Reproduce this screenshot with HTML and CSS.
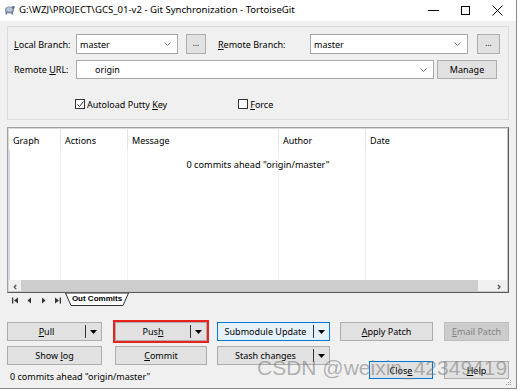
FILE: index.html
```html
<!DOCTYPE html>
<html lang="en">
<head>
<meta charset="utf-8">
<title>Git Synchronization - TortoiseGit</title>
<link rel="stylesheet" href="styles.css">
</head>
<body>
<div class="window">
    <!-- Title bar -->
    <div class="titlebar">
        <svg class="app-icon" width="11" height="11" viewBox="0 0 11 11">
            <ellipse cx="5.5" cy="6" rx="4.5" ry="3.5" fill="#7d8fa6"/>
            <ellipse cx="5.5" cy="5.5" rx="3" ry="2.2" fill="#b9c6d6"/>
            <circle cx="9.3" cy="3.5" r="1.4" fill="#5d6f86"/>
            <rect x="1.5" y="8.5" width="1.6" height="2" fill="#5d6f86"/>
            <rect x="7.5" y="8.5" width="1.6" height="2" fill="#5d6f86"/>
        </svg>
        <span class="title">G:\WZJ\PROJECT\GCS_01-v2 - Git Synchronization - TortoiseGit</span>
        <div class="controls">
            <span class="ctl"><svg width="11" height="11" viewBox="0 0 11 11"><line x1="0" y1="5.5" x2="11" y2="5.5" stroke="#000"/></svg></span>
            <span class="ctl"><svg width="11" height="11" viewBox="0 0 11 11"><rect x="1.5" y="1.5" width="8" height="8" fill="none" stroke="#000"/></svg></span>
            <span class="ctl"><svg width="11" height="11" viewBox="0 0 11 11"><path d="M0.5 0.5 L10.5 10.5 M10.5 0.5 L0.5 10.5" stroke="#000"/></svg></span>
        </div>
    </div>

    <div class="content">
        <!-- Branch / remote settings -->
        <div class="group">
            <div class="row">
                <span class="lbl"><u>L</u>ocal Branch:</span>
                <div class="combo local-combo">
                    <span>master</span>
                    <svg class="chev" width="7" height="4" viewBox="0 0 7 4"><polyline points="0.5,0.5 3.5,3.5 6.5,0.5" fill="none" stroke="#777"/></svg>
                </div>
                <button class="btn dots">...</button>
                <span class="lbl remote-lbl"><u>R</u>emote Branch:</span>
                <div class="combo remote-combo">
                    <span>master</span>
                    <svg class="chev" width="7" height="4" viewBox="0 0 7 4"><polyline points="0.5,0.5 3.5,3.5 6.5,0.5" fill="none" stroke="#777"/></svg>
                </div>
                <button class="btn dots dots-right">...</button>
            </div>
            <div class="row row-url">
                <span class="lbl">Remote <u>U</u>RL:</span>
                <div class="combo url-combo">
                    <span class="url-text">origin</span>
                    <svg class="chev" width="7" height="4" viewBox="0 0 7 4"><polyline points="0.5,0.5 3.5,3.5 6.5,0.5" fill="none" stroke="#777"/></svg>
                </div>
                <button class="btn manage">Manage</button>
            </div>
            <div class="row row-checks">
                <label class="check autoload">
                    <span class="box"><svg width="9" height="9" viewBox="0 0 9 9"><polyline points="1.5,4.5 3.5,6.5 7.5,1.5" fill="none" stroke="#333" stroke-width="1"/></svg></span>
                    <span>Autoload Putty <u>K</u>ey</span>
                </label>
                <label class="check force">
                    <span class="box"></span>
                    <span><u>F</u>orce</span>
                </label>
            </div>
        </div>

        <!-- Commit list -->
        <div class="list">
            <div class="list-head">
                <div class="col c-graph">Graph</div>
                <div class="col c-actions">Actions</div>
                <div class="col c-msg">Message</div>
                <div class="col c-author">Author</div>
                <div class="col c-date">Date</div>
            </div>
            <div class="list-body">
                <div class="lines">
                    <div class="line c-graph first"></div>
                    <div class="line c-actions"></div>
                    <div class="line c-msg"></div>
                    <div class="line c-author"></div>
                    <div class="line c-date"></div>
                </div>
                <p class="empty">0 commits ahead "origin/master"</p>
            </div>
            <div class="hscroll">
                <span class="arrow">&lsaquo;</span>
                <div class="thumb"></div>
                <span class="arrow arrow-right">&rsaquo;</span>
            </div>
        </div>

        <!-- Tab strip -->
        <div class="tabs">
            <div class="nav">
                <svg width="7" height="7" viewBox="0 0 7 7"><rect x="0" y="0.5" width="1.3" height="6" fill="#333"/><polygon points="6,0.5 2,3.5 6,6.5" fill="#333"/></svg>
                <svg width="7" height="7" viewBox="0 0 7 7"><polygon points="5,0.5 1.5,3.5 5,6.5" fill="#333"/></svg>
                <svg width="7" height="7" viewBox="0 0 7 7"><polygon points="2,0.5 5.5,3.5 2,6.5" fill="#333"/></svg>
                <svg width="7" height="7" viewBox="0 0 7 7"><polygon points="1,0.5 5,3.5 1,6.5" fill="#333"/><rect x="5.7" y="0.5" width="1.3" height="6" fill="#333"/></svg>
            </div>
            <div class="tab">
                <svg class="tab-shape" width="64" height="13" viewBox="0 0 64 13"><polygon points="0.5,0 6,12.5 58,12.5 63.5,0" fill="#fff" stroke="#333"/></svg>
                <span>Out Commits</span>
            </div>
        </div>

        <!-- Action buttons -->
        <div class="actions">
            <div class="btn split b1">
                <span class="main"><u>P</u>ull</span>
                <span class="drop"><svg width="7" height="4" viewBox="0 0 7 4"><polygon points="0,0 7,0 3.5,4" fill="#000"/></svg></span>
            </div>
            <div class="btn split b2 marked">
                <span class="main">Pus<u>h</u></span>
                <span class="drop"><svg width="7" height="4" viewBox="0 0 7 4"><polygon points="0,0 7,0 3.5,4" fill="#000"/></svg></span>
            </div>
            <div class="btn split b3 hot">
                <span class="main">Submodule Update</span>
                <span class="drop"><svg width="7" height="4" viewBox="0 0 7 4"><polygon points="0,0 7,0 3.5,4" fill="#000"/></svg></span>
            </div>
            <button class="btn b4"><span><u>A</u>pply Patch</span></button>
            <button class="btn b5 disabled"><span><u>E</u>mail Patch</span></button>

            <button class="btn b1"><span>Show <u>l</u>og</span></button>
            <button class="btn b2"><span><u>C</u>ommit</span></button>
            <div class="btn split b3">
                <span class="main">Stash changes</span>
                <span class="drop"><svg width="7" height="4" viewBox="0 0 7 4"><polygon points="0,0 7,0 3.5,4" fill="#000"/></svg></span>
            </div>
            <button class="btn close default"><span>Clos<u>e</u></span></button>
            <button class="btn help"><span><u>H</u>elp</span></button>

            <div class="status">0 commits ahead "origin/master"</div>
        </div>
    </div>

    <svg class="grip" width="6" height="6" viewBox="0 0 6 6">
        <rect x="4" y="0" width="1" height="1" fill="#999"/>
        <rect x="2" y="2" width="1" height="1" fill="#999"/>
        <rect x="4" y="2" width="1" height="1" fill="#999"/>
        <rect x="0" y="4" width="1" height="1" fill="#999"/>
        <rect x="2" y="4" width="1" height="1" fill="#999"/>
        <rect x="4" y="4" width="1" height="1" fill="#999"/>
    </svg>
    <div class="watermark">CSDN @weixin_42349419</div>
</div>
</body>
</html>
```

FILE: styles.css
```css
/* Page */
body {
    margin: 0;
    background-color: #fff;
    font-family: "Noto Sans", "Open Sans", sans-serif;
    font-size: 9px;
    color: #000;
}

u {
    text-decoration-thickness: 1px;
    text-underline-offset: 1px;
}

/* Window frame */
.window {
    position: relative;
    width: 516px;
    height: 388px;
    background-color: #f0f0f0;
    border-right: 1px solid #8a8a8a;
    border-bottom: 1px solid #8a8a8a;
    overflow: hidden;
}

/* Title bar */
.titlebar {
    height: 21px;
    background-color: #fff;
    display: flex;
    align-items: center;
}

.app-icon {
    margin-left: 4px;
    margin-right: 4px;
    margin-top: -2px;
}

.title {
    font-size: 9.6px;
    margin-top: -2px;
}

.controls {
    margin-left: auto;
    margin-right: 3px;
    display: flex;
    height: 100%;
}

.ctl {
    width: 32px;
    display: flex;
    align-items: center;
    justify-content: center;
    margin-top: -1px;
}

/* Dialog content */
.content {
    padding: 5px 7px 0 7px;
}

.group {
    border: 1px solid #dcdcdc;
    padding: 7px 6px 9px 6px;
}

.row {
    display: flex;
    align-items: center;
    height: 20px;
}

.row-url {
    margin-top: 6px;
    height: 19px;
}

.row-checks {
    margin-top: 19px;
    height: 12px;
}

.lbl {
    width: 62px;
    flex: none;
}

.remote-lbl {
    margin-left: 12px;
    width: 92px;
}

/* Combo boxes */
.combo {
    height: 20px;
    box-sizing: border-box;
    background-color: #fff;
    border: 1px solid #a8a8a8;
    display: flex;
    align-items: center;
    padding: 0 6px 0 3px;
}

.combo .chev {
    margin-left: auto;
}

.local-combo {
    width: 102px;
}

.remote-combo {
    width: 158px;
}

.url-combo {
    width: 358px;
    height: 19px;
}

.url-text {
    padding-left: 15px;
}

/* Buttons */
.btn {
    box-sizing: border-box;
    height: 19px;
    background-color: #e1e1e1;
    border: 1px solid #adadad;
    font-family: inherit;
    font-size: 9px;
    color: #000;
    padding: 0;
    display: flex;
    align-items: center;
    justify-content: center;
}

.dots {
    width: 20px;
    height: 20px;
    margin-left: 8px;
    font-size: 8px;
    padding-bottom: 3px;
}

.dots-right {
    width: 23px;
    margin-left: 9px;
}

.manage {
    width: 60px;
    margin-left: 3px;
}

/* Checkboxes */
.check {
    display: flex;
    align-items: center;
}

.check .box {
    box-sizing: border-box;
    width: 10px;
    height: 10px;
    border: 1px solid #333;
    background-color: #fff;
    margin-right: 2px;
    display: flex;
}

.check .box svg {
    margin: -0.5px;
}

.autoload {
    margin-left: 61px;
}

.force {
    margin-left: 71px;
}

/* Commit list */
.list {
    margin-top: 7px;
    height: 166px;
    box-sizing: border-box;
    border: 1px solid;
    border-color: #a0a0a0 #5a5a5a #5a5a5a #a0a0a0;
    box-shadow: inset 1px 1px 0 #d8d8d8, inset -1px -1px 0 #c8c8c8;
    background-color: #fff;
    padding: 1px;
    display: flex;
    flex-direction: column;
}

.list-head,
.lines {
    display: grid;
    grid-template-columns: 52px 67px 151px 87px 1fr;
}

.list-head {
    height: 21px;
}

.list-head .col {
    padding-left: 4px;
    padding-top: 2px;
    line-height: 19px;
    border-right: 1px solid #e5e5e5;
}

.list-head .c-date {
    border-right: none;
}

.list-body {
    flex: 1;
    display: grid;
}

.lines,
.empty {
    grid-area: 1 / 1;
}

.line {
    border-right: 1px solid #eef3f9;
}

.line.first {
    border-left: 1px solid #cfe0f3;
}

.line.c-date {
    border-right: none;
}

.empty {
    margin: 0;
    padding-top: 8px;
    text-align: center;
    font-size: 9.2px;
}

.hscroll {
    height: 11px;
    background-color: #f0f0f0;
    display: flex;
    align-items: center;
}

.hscroll .arrow {
    width: 12px;
    text-align: center;
    font-size: 11px;
    line-height: 11px;
    color: #555;
    font-weight: bold;
}

.hscroll .thumb {
    width: 457px;
    height: 100%;
    background-color: #cdcdcd;
}

.hscroll .arrow-right {
    margin-left: auto;
    margin-right: 2px;
}

/* Tab strip */
.tabs {
    display: flex;
    align-items: flex-start;
    height: 13px;
}

.nav {
    display: flex;
    gap: 7px;
    padding: 4px 0 0 5px;
}

.tab {
    position: relative;
    width: 64px;
    height: 13px;
    margin-left: 4px;
    display: flex;
    justify-content: center;
    font-family: "Liberation Sans", sans-serif;
    font-weight: bold;
    font-size: 8px;
    line-height: 12px;
}

.tab-shape {
    position: absolute;
    left: 0;
    top: 0;
}

.tab span {
    position: relative;
}

/* Action buttons grid */
.actions {
    margin-top: 16px;
    display: grid;
    grid-template-columns: 108px 102px 123px 104px 65px;
    grid-template-rows: 19px 19px 13px;
    row-gap: 5px;
}

.b1 { width: 95px; }
.b2 { width: 92px; }
.b3 { width: 113px; }
.b4 { width: 93px; }
.b5 { width: 65px; }

.split {
    justify-content: flex-start;
}

.split .main {
    flex: 1;
    text-align: center;
}

.split .drop {
    width: 15px;
    height: 13px;
    border-left: 1px solid #333;
    display: flex;
    align-items: center;
    justify-content: center;
}

.marked {
    outline: 2px solid #e8231f;
    outline-offset: 0;
}

.hot {
    background-color: #e5f1fb;
    border-color: #0078d7;
}

.disabled {
    background-color: #cccccc;
    border-color: #bfbfbf;
    color: #838383;
}

.close {
    grid-column: 4;
    grid-row: 2 / 4;
    align-self: end;
    width: 64px;
    height: 18px;
    margin-left: 29px;
    margin-bottom: 4px;
}

.default {
    border-color: #0078d7;
}

.help {
    grid-column: 5;
    grid-row: 2 / 4;
    align-self: end;
    width: 65px;
    height: 18px;
    margin-bottom: 4px;
}

.status {
    grid-column: 1 / 4;
    grid-row: 3;
    padding-left: 3px;
    line-height: 13px;
}

/* Overlays */
.grip {
    position: absolute;
    right: 4px;
    bottom: 2px;
}

.watermark {
    position: absolute;
    left: 257px;
    top: 356px;
    font-family: "Liberation Sans", sans-serif;
    font-size: 21px;
    color: rgba(120, 120, 120, 0.55);
    white-space: nowrap;
}
```
